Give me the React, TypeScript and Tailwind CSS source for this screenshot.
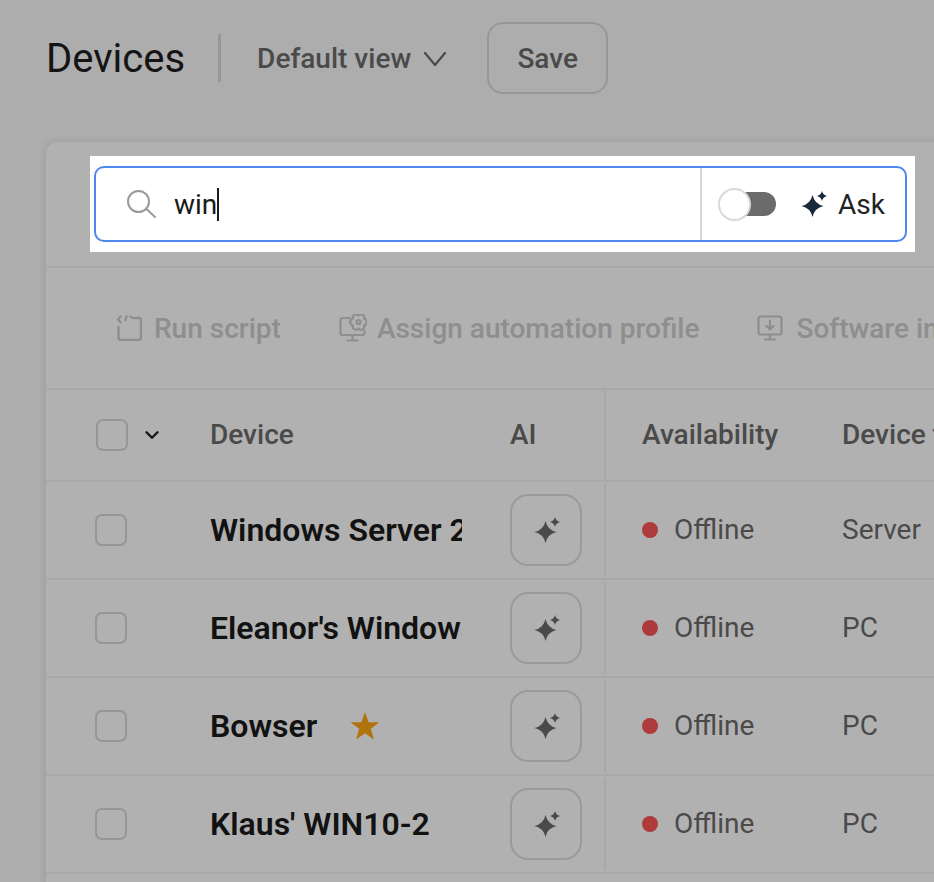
import { ChevronDown } from "lucide-react";

type Device = {
  name: string;
  type: string;
  starred?: boolean;
};

const devices: Device[] = [
  { name: "Windows Server 2022", type: "Server" },
  { name: "Eleanor's Windows PC", type: "PC" },
  { name: "Bowser", type: "PC", starred: true },
  { name: "Klaus' WIN10-2", type: "PC" },
];

function Sparkle({ className }: { className?: string }) {
  return (
    <svg viewBox="0 0 26 26" className={className} fill="currentColor">
      <path d="M11.500 4Q13.500 13 22.500 15Q13.500 17 11.500 26Q9.500 17 .5 15Q9.500 13 11.500 4Z" />
      <path d="M21 0Q21.900 4.100 26 5Q21.900 5.900 21 10Q20.100 5.900 16 5Q20.100 4.100 21 0Z" />
    </svg>
  );
}

function RunScriptIcon() {
  return (
    <svg viewBox="0 0 26 26" className="h-[26px] w-[26px] shrink-0 text-[#8e8e8e]" fill="none" stroke="currentColor" strokeWidth="2.400" strokeLinecap="round" strokeLinejoin="round">
      <path d="M4.500 1.500 2 4.500l2.500 3" />
      <path d="M10.500 1.500 9.500 5" />
      <path d="M14.500 1.500 16 3" />
      <path d="M18 3h4.500A2.500 2.500 0 0 1 25 5.500v17a2.500 2.500 0 0 1-2.500 2.500H5a2.500 2.500 0 0 1-2.500-2.500V12" />
    </svg>
  );
}

function AutomationIcon() {
  return (
    <svg viewBox="0 0 28 28" className="h-[28px] w-[28px] shrink-0 text-[#8e8e8e]" fill="none" stroke="currentColor" strokeWidth="2.200" strokeLinecap="round" strokeLinejoin="round">
      <path d="M10.500 4H3.500A2 2 0 0 0 1.500 6v13a2 2 0 0 0 2 2h20a2 2 0 0 0 2-2v-2" />
      <path d="M13.500 21v5M8.500 26.500h10" />
      <path d="M19.500 1.500A3.300 3.300 0 0 1 25.130 4.750A3.300 3.300 0 0 1 25.130 11.250A3.300 3.300 0 0 1 19.500 14.500A3.300 3.300 0 0 1 13.870 11.250A3.300 3.300 0 0 1 13.870 4.750A3.300 3.300 0 0 1 19.500 1.500Z" />
      <circle cx="19.500" cy="8" r="2" />
    </svg>
  );
}

function SoftwareIcon() {
  return (
    <svg viewBox="0 0 26 26" className="h-[26px] w-[26px] shrink-0 text-[#8e8e8e]" fill="none" stroke="currentColor" strokeWidth="2.200" strokeLinecap="round" strokeLinejoin="round">
      <rect x="1.500" y="1.500" width="23" height="18" rx="2" />
      <path d="M13 5.500v9M9.500 11l3.500 3.500 3.500-3.500" />
      <path d="M13 20v4M8 24.500h10" />
    </svg>
  );
}

function DeviceRow({ device }: { device: Device }) {
  return (
    <div className="flex h-[98px] items-center border-t-[2px] border-[#a8a8a8]">
      <div className="w-[164px] shrink-0 pl-[49px]">
        <div className="h-[32px] w-[32px] rounded-[7px] border-[2.500px] border-[#969696]" />
      </div>
      <div className="flex w-[252px] shrink-0 items-center overflow-hidden">
        <span className="whitespace-nowrap text-[32px] font-semibold leading-none text-[#121212]">{device.name}</span>
        {device.starred && (
          <svg viewBox="0 0 30 30" className="ml-[33px] h-[30px] w-[30px] shrink-0" fill="#b2730e">
            <path d="M15 1l3.600 10.200H29.500l-8.700 6.500 3.100 10.800L15 22.200l-8.900 6.300 3.100-10.800L.5 11.200h10.900z" />
          </svg>
        )}
      </div>
      <div className="w-[48px] shrink-0" />
      <div className="flex h-[72px] w-[72px] shrink-0 items-center justify-center rounded-[18px] border-[2.500px] border-[#9a9a9a] text-[#4a4a4a]">
        <Sparkle className="ml-[2px] h-[26px] w-[26px]" />
      </div>
      <div className="ml-[22px] h-[92px] w-[2px] shrink-0 bg-[#a8a8a8]" />
      <div className="flex w-[236px] shrink-0 items-center pl-[36px]">
        <span className="h-[16px] w-[16px] rounded-full bg-[#ad3b3b]" />
        <span className="ml-[16px] text-[28px] leading-none text-[#4a4a4a]">Offline</span>
      </div>
      <span className="whitespace-nowrap text-[28px] leading-none text-[#4a4a4a]">{device.type}</span>
    </div>
  );
}

export default function App() {
  return (
    <div className="h-[882px] w-[934px] overflow-hidden bg-[#adadad] font-['Roboto',sans-serif]">
      <header className="flex h-[116px] items-center pl-[46px]">
        <h1 className="pt-[2px] text-[40px] font-normal leading-none text-[#141414]">Devices</h1>
        <div className="ml-[33px] h-[48px] w-[3px] bg-[#979797]" />
        <button className="ml-[36px] flex items-center pt-[2px] text-[28px] font-medium leading-none text-[#4a4a4a]">
          Default view
          <svg viewBox="0 0 24 16" className="ml-[12px] h-[16px] w-[24px]" fill="none" stroke="currentColor" strokeWidth="2.200" strokeLinecap="round" strokeLinejoin="round">
            <path d="M2 2l10 12L22 2" />
          </svg>
        </button>
        <button className="ml-[40px] h-[72px] w-[121px] rounded-[16px] border-[2.500px] border-[#979797] pt-[2px] text-[28px] font-medium leading-none text-[#4a4a4a]">
          Save
        </button>
      </header>

      <main className="ml-[46px] mt-[26px] h-[760px] w-[920px] rounded-tl-[12px] bg-[#b1b1b1] shadow-[0_0_8px_rgba(0,0,0,0.12)]">
        <div className="h-[124px] pl-[44px] pt-[14px]">
          <div className="h-[96px] w-[825px] bg-white p-[10px_8px_10px_4px]">
            <div className="flex h-[76px] items-center rounded-[10px] border-[2.500px] border-[#4f86ec]">
              <svg viewBox="0 0 30 30" className="ml-[30px] h-[30px] w-[30px] shrink-0 text-[#9a9a9a]" fill="none" stroke="currentColor" strokeWidth="2" strokeLinecap="round">
                <circle cx="12.500" cy="12.500" r="10.500" />
                <path d="M20.500 20 29 28" />
              </svg>
              <span className="ml-[18px] flex h-[34px] items-center text-[28px] leading-none text-[#1a1a1a]">
                <span className="pt-[2px]">win</span>
                <span className="h-[33px] w-[2px] bg-[#1a1a1a]" />
              </span>
              <div className="ml-auto flex h-full items-center border-l-[2.500px] border-[#d8d8d8]">
                <div className="relative ml-[16px] h-[24px] w-[58px]">
                  <div className="ml-[8px] h-[24px] w-[50px] rounded-full bg-[#6b6b6b]" />
                  <div className="absolute left-0 top-[-4.500px] h-[33px] w-[33px] rounded-full border-[2.500px] border-[#d9d9d9] bg-white" />
                </div>
                <Sparkle className="ml-[25px] h-[26px] w-[26px] text-[#17293a]" />
                <span className="ml-[11px] mr-[20px] pt-[1px] text-[28px] leading-none text-[#222]">Ask</span>
              </div>
            </div>
          </div>
        </div>

        <div className="flex h-[122px] items-center gap-[13px] whitespace-nowrap border-t-[2px] border-[#a8a8a8] pl-[70px] text-[28px] font-medium leading-none text-[#8e8e8e]">
          <RunScriptIcon />
          <span className="-ml-[1px] shrink-0 pt-[2px]">Run script</span>
          <span className="w-[32px] shrink-0" />
          <AutomationIcon />
          <span className="-ml-[3px] shrink-0 pt-[2px]">Assign automation profile</span>
          <span className="w-[32px] shrink-0" />
          <SoftwareIcon />
          <span className="shrink-0 pt-[2px]">Software inventory</span>
        </div>

        <div className="flex h-[92px] items-center border-t-[2px] border-[#a8a8a8] text-[28px] font-medium leading-none text-[#4a4a4a]">
          <div className="flex w-[164px] shrink-0 items-center pl-[50px]">
            <div className="h-[32px] w-[32px] rounded-[7px] border-[2.500px] border-[#969696]" />
            <ChevronDown className="ml-[13px] h-[22px] w-[22px] text-[#141414]" strokeWidth={2.500} />
          </div>
          <span className="w-[300px] shrink-0">Device</span>
          <span className="w-[94px] shrink-0">AI</span>
          <div className="h-full w-[2px] shrink-0 bg-[#a8a8a8]" />
          <span className="ml-[36px] w-[200px] shrink-0">Availability</span>
          <span className="whitespace-nowrap">Device type</span>
        </div>

        {devices.map((device) => (
          <DeviceRow key={device.name} device={device} />
        ))}
        <div className="border-t-[2px] border-[#a8a8a8]" />
      </main>
    </div>
  );
}
